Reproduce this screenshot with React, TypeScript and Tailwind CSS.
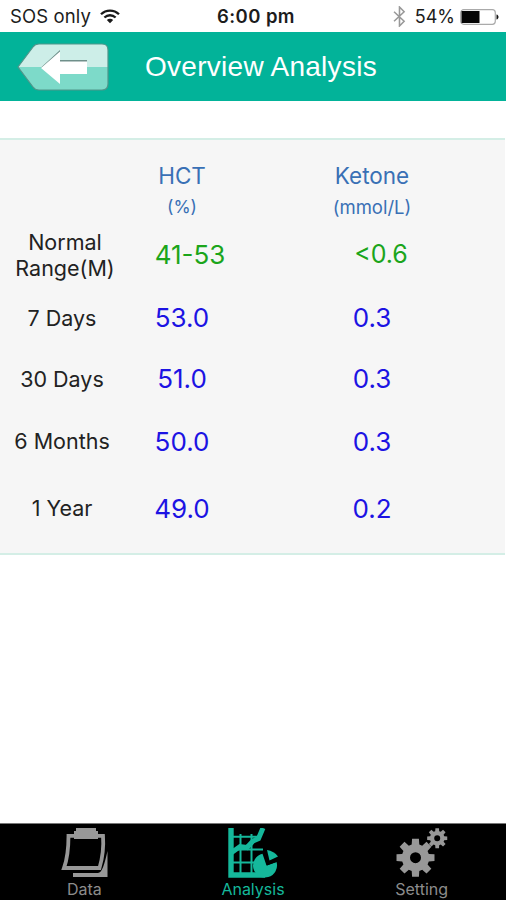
import { useState } from 'react';

type Tab = 'data' | 'analysis' | 'setting';

const rows = [
  { label: '7 Days', hct: '53.0', ketone: '0.3', height: 'h-[64px]' },
  { label: '30 Days', hct: '51.0', ketone: '0.3', height: 'h-[58px]' },
  { label: '6 Months', hct: '50.0', ketone: '0.3', height: 'h-[67px]' },
  { label: '1 Year', hct: '49.0', ketone: '0.2', height: 'h-[67px]' },
];

// Outline of a gear with square teeth, centred on cx/cy
const gearPath = (cx: number, cy: number, outer: number, inner: number, hole: number, tooth: number) => {
  const points: string[] = [];
  for (let i = 0; i < 8; i++) {
    const a = (i * Math.PI) / 4;
    const base = Math.asin(tooth / inner);
    const tip = Math.asin((tooth * 0.9) / outer);
    [[inner, a - base], [outer, a - tip], [outer, a + tip], [inner, a + base]].forEach(([r, t]) => {
      points.push(`${(cx + r * Math.sin(t)).toFixed(2)} ${(cy - r * Math.cos(t)).toFixed(2)}`);
    });
  }
  return `M${points.join('L')}ZM${cx - hole} ${cy}a${hole} ${hole} 0 1 0 ${hole * 2} 0a${hole} ${hole} 0 1 0 ${-hole * 2} 0Z`;
};

function StatusBar() {
  return (
    <div className="grid h-8 shrink-0 grid-cols-3 items-center pt-px text-[18.5px] leading-none text-[#1c1c1c]">
      <div className="flex items-center gap-[9px] pl-[10px]">
        <span className="tracking-[0.1px]">SOS only</span>
        <svg className="h-[15px] w-5" viewBox="0 0 20 15" fill="none" stroke="#1a1a1a" strokeWidth="2.3">
          <path d="M1 5.2C6 .3 14 .3 19 5.2" />
          <path d="M4.4 8.5c3.2-3 8-3 11.2 0" />
          <path d="M10 14.3 6.8 11c1.8-1.6 4.6-1.6 6.4 0Z" fill="#1a1a1a" stroke="none" />
        </svg>
      </div>
      <div className="pl-[6px] text-center font-semibold tracking-[0.4px] whitespace-nowrap">6:00 pm</div>
      <div className="flex items-center justify-end pr-[7px]">
        <svg className="mr-[9px] h-[21px] w-[13px]" viewBox="0 0 12 20" fill="none" stroke="#999" strokeWidth="1.5">
          <path d="m.8 5.5 9.6 9L6 19V1l4.4 4.5-9.6 9" />
        </svg>
        <span className="mr-[5px] text-[18px]">54%</span>
        <svg className="h-4 w-[39px]" viewBox="0 0 39 16">
          <rect x=".7" y=".7" width="34.6" height="14.6" rx="3" fill="#fff" stroke="#aaa" strokeWidth="1.2" />
          <path d="M1.5 2h18v12h-18z" fill="#050505" />
          <path d="M36.5 5.5c2.7.5 2.7 4.5 0 5Z" fill="#111" />
        </svg>
      </div>
    </div>
  );
}

function BackIcon() {
  return (
    <svg className="h-[48px] w-[92px]" viewBox="0 0 92 48">
      <path d="M1 24 16 4q2-3 6-3h63q6 0 6 6v17Z" fill="#cdeee8" />
      <path d="M1 24h90v17q0 6-6 6H22q-4 0-6-3Z" fill="#7ddac9" />
      <path d="M1 24 16 4q2-3 6-3h63q6 0 6 6v34q0 6-6 6H22q-4 0-6-3Z" fill="none" stroke="#51958a" strokeWidth="1.2" />
      <path d="M24 24.5 43 7v10h27v4H43Z" fill="#6f8f8a" />
      <path d="M24 25 43 8.5v10h27V31H43v10Z" fill="#fff" />
    </svg>
  );
}

function DataIcon() {
  return (
    <svg className="h-[50px] w-[48px]" viewBox="0 0 48 50" fill="#989898">
      <path d="M47.5 23v26H13v-4h25c4 0 6.5-9 9.5-22Z" />
      <path d="M8.500 7.800h34.500c.8 11-.8 23-3.500 32.200H4C8 29 8.500 19 8.500 7.800Z" fill="#000" stroke="#989898" strokeWidth="3.8" />
      <path d="M16 0h20v3h2v8H14V3h2Z" />
    </svg>
  );
}

function AnalysisIcon() {
  return (
    <svg className="h-[50px] w-[52px]" viewBox="0 0 52 50" fill="none" stroke="#15b89b">
      <path d="M4 0v47h34" strokeWidth="5.4" />
      <path d="M2 8.7h32M2 21.5h34M2 34.5h26M13.500 6v41M24.500 6v41" strokeWidth="2" />
      <path d="m4 25 9-6.500 7 1 6-6.500 5.500-2.500L36 0" strokeWidth="5" />
      <path d="M39.500 37.500 35.500 25.800A12 12 0 1 0 49.500 34Z" fill="#15b89b" stroke="none" />
      <path d="M40 37.500 37 24l5-6 12 7-2 8Z" fill="#000" stroke="none" />
      <path d="m42.500 32.500-2.500-10.500c4.500.5 8.500 3 11 6.500Z" fill="#15b89b" stroke="none" />
    </svg>
  );
}

function SettingIcon() {
  return (
    <svg className="h-[50px] w-[52px]" viewBox="0 0 52 50" fill="#989898" fillRule="evenodd">
      <path d={gearPath(19.5, 29.7, 19.3, 13.8, 5.5, 3.8)} />
      <path d={gearPath(41.2, 10.2, 10.2, 7.3, 3, 2)} />
    </svg>
  );
}

const tabs: { id: Tab; label: string; icon: () => React.JSX.Element }[] = [
  { id: 'data', label: 'Data', icon: DataIcon },
  { id: 'analysis', label: 'Analysis', icon: AnalysisIcon },
  { id: 'setting', label: 'Setting', icon: SettingIcon },
];

export default function App() {
  const [activeTab, setActiveTab] = useState<Tab>('analysis');

  return (
    <div className="flex h-[900px] w-[506px] flex-col overflow-hidden bg-white font-['Inter',sans-serif]">
      <StatusBar />

      <header className="flex h-[69px] shrink-0 items-center bg-[#02b399] pl-[17px]">
        <button aria-label="Back"><BackIcon /></button>
        <h1 className="ml-[36px] font-['Liberation_Sans',sans-serif] text-[28px] leading-none tracking-[0.28px] whitespace-nowrap text-white">Overview Analysis</h1>
      </header>

      <main className="flex-1 pt-[37px]">
        <section className="mr-px h-[417px] border-y-2 border-[#d4eee6] bg-[#f6f6f6] text-center">
          <div className="grid h-[84px] grid-cols-[124px_116px_264px] text-[#3970b5]">
            <div />
            <div className="pt-[24px]">
              <div className="text-[22.5px] leading-6">HCT</div>
              <div className="pt-[7px] text-[17.5px] leading-6">(%)</div>
            </div>
            <div className="pt-[24px]">
              <div className="text-[22.5px] leading-6">Ketone</div>
              <div className="pt-[7px] text-[18.5px] leading-6">(mmol/L)</div>
            </div>
          </div>
          <div className="grid h-[62px] grid-cols-[124px_116px_264px] items-center text-[26px] text-[#1ba51b]">
            <div className="pb-px pl-[6px] text-[21.5px] leading-[26px] text-[#222]">Normal<br />Range(M)</div>
            <div className="pb-[2px] pl-4">41-53</div>
            <div className="pb-px pl-[18px] text-[25px]">&lt;0.6</div>
          </div>
          {rows.map((row) => (
            <div key={row.label} className={`grid grid-cols-[124px_116px_264px] items-center text-[26px] text-[#1c13e3] ${row.height}`}>
              <div className="text-[21.5px] text-[#222]">{row.label}</div>
              <div className="pb-px">{row.hct}</div>
              <div className="pb-px">{row.ketone}</div>
            </div>
          ))}
        </section>
      </main>

      <nav className="grid h-[77px] shrink-0 grid-cols-3 border-t border-[#777] bg-black">
        {tabs.map(({ id, label, icon: Icon }) => (
          <button key={id} onClick={() => setActiveTab(id)} className={`flex flex-col items-center pt-[4px] ${activeTab === id ? 'text-[#15b89b]' : 'text-[#8c8c8c]'}`}>
            <Icon />
            <span className="mt-px text-[16px] leading-5">{label}</span>
          </button>
        ))}
      </nav>
    </div>
  );
}
